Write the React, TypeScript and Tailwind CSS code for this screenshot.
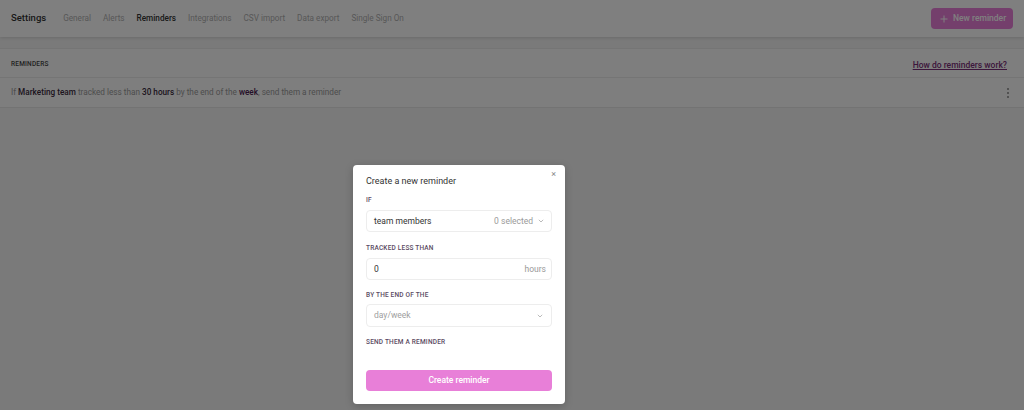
import React from "react";

const font = { fontFamily: "Roboto, 'Liberation Sans', sans-serif" };

function Chevron({ className = "" }: { className?: string }) {
  return (
    <svg width="6" height="4" viewBox="0 0 6 4" className={className} fill="none">
      <path d="M0.8 0.8 L3 3 L5.2 0.8" stroke="currentColor" strokeWidth="0.8" />
    </svg>
  );
}

export default function App() {
  const tabs = ["General", "Alerts", "Reminders", "Integrations", "CSV import", "Data export", "Single Sign On"];
  return (
    <div className="relative w-full h-[410px] overflow-hidden bg-[#f4f4f4]" style={font}>
      {/* Header */}
      <div className="h-[37px] bg-white flex items-center pl-[11px] pr-[11px] shadow-[0_1px_3px_rgba(0,0,0,0.12)] relative z-10">
        <div className="text-[9.5px] font-medium text-[#333] mr-[17px]">Settings</div>
        <div className="flex items-center gap-[12px] text-[8.2px]">
          {tabs.map((t) => (
            <span key={t} className={t === "Reminders" ? "text-[#333] font-medium" : "text-[#b0b0b0]"}>
              {t}
            </span>
          ))}
        </div>
        <div className="ml-auto h-[21px] w-[82px] rounded-[4px] bg-[#e87fd8] flex items-center pl-[9px] gap-[5px] text-white text-[8.5px] font-medium">
          <svg width="8" height="8" viewBox="0 0 8 8">
            <path d="M4 0.5 V7.5 M0.5 4 H7.5" stroke="currentColor" strokeWidth="1" />
          </svg>
          <span>New reminder</span>
        </div>
      </div>

      {/* Content */}
      <div className="mt-[11px] border-t border-[#ebebeb]">
        <div className="h-[29px] bg-[#fcfcfc] border-b border-[#ebebeb] flex items-center justify-between pl-[11px] pr-[17px] pt-[4px]">
          <span className="text-[6.5px] font-medium tracking-[0.2px] text-[#444]">REMINDERS</span>
          <span className="text-[8.5px] font-medium text-[#7a2f78] underline">How do reminders work?</span>
        </div>
        <div className="h-[30px] bg-[#fcfcfc] border-b border-[#e6e6e6] flex items-center justify-between pl-[11px] pr-[14px] text-[8.2px] text-[#9a9a9a]">
          <span>
            If <b className="font-medium text-[#3a2b3c]">Marketing team</b> tracked less than{" "}
            <b className="font-medium text-[#3a2b3c]">30 hours</b> by the end of the{" "}
            <b className="font-medium text-[#4a2150]">week</b>, send them a reminder
          </span>
          <svg width="4" height="12" viewBox="0 0 4 12">
            <circle cx="2" cy="2" r="1" fill="#888" />
            <circle cx="2" cy="6" r="1" fill="#888" />
            <circle cx="2" cy="10" r="1" fill="#888" />
          </svg>
        </div>
      </div>

      {/* Overlay */}
      <div className="absolute inset-0 bg-black/50 z-20" />

      {/* Modal */}
      <div className="absolute left-[353px] top-[165px] w-[212px] h-[239px] bg-white rounded-[4px] z-30 px-[13px] pt-[10px] shadow-[0_2px_8px_rgba(0,0,0,0.2)]">
        <span className="absolute right-[9px] top-[5px] text-[9px] text-[#888] leading-none">×</span>
        <div className="text-[9px] leading-[12px] text-[#333]">Create a new reminder</div>

        <div className="mt-[9px] text-[6.5px] leading-[8px] font-medium text-[#5a4a62] tracking-[0.2px]">IF</div>
        <div className="mt-[6px] h-[22px] rounded-[4px] border border-[#ededed] flex items-center pl-[7px] pr-[7px] text-[8.5px]">
          <span className="text-[#333]">team members</span>
          <span className="ml-auto text-[#9a9a9a]">0 selected</span>
          <Chevron className="ml-[5px] text-[#aaa]" />
        </div>

        <div className="mt-[12px] text-[6.5px] leading-[8px] font-medium text-[#5a4a62] tracking-[0.2px]">TRACKED LESS THAN</div>
        <div className="mt-[6px] h-[22px] rounded-[4px] border border-[#ededed] flex items-center pl-[7px] pr-[5px] text-[8.5px]">
          <span className="text-[#333]">0</span>
          <span className="ml-auto text-[#9a9a9a]">hours</span>
        </div>

        <div className="mt-[11px] text-[6.5px] leading-[8px] font-medium text-[#5a4a62] tracking-[0.2px]">BY THE END OF THE</div>
        <div className="mt-[5px] h-[23px] rounded-[4px] border border-[#ededed] flex items-center pl-[7px] pr-[8px] text-[8.5px]">
          <span className="text-[#a0a0a0]">day/week</span>
          <Chevron className="ml-auto text-[#aaa]" />
        </div>

        <div className="mt-[11px] text-[6.5px] leading-[8px] font-medium text-[#5a4a62] tracking-[0.2px]">SEND THEM A REMINDER</div>

        <div className="mt-[24px] h-[21px] rounded-[4px] bg-[#e87fd8] flex items-center justify-center text-white text-[8.5px] font-medium">
          Create reminder
        </div>
      </div>
    </div>
  );
}
